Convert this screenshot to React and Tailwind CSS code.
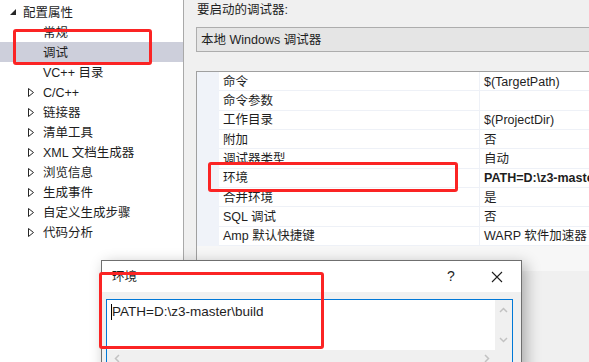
import React from 'react';

/* ─── 左侧树 ─── */
const TREE = [
  { label: '常规' },
  { label: '调试', selected: true },
  { label: 'VC++ 目录' },
  { label: 'C/C++', expander: true },
  { label: '链接器', expander: true },
  { label: '清单工具', expander: true },
  { label: 'XML 文档生成器', expander: true },
  { label: '浏览信息', expander: true },
  { label: '生成事件', expander: true },
  { label: '自定义生成步骤', expander: true },
  { label: '代码分析', expander: true },
];

/* ─── 属性表 ─── */
const PROPS = [
  ['命令', '$(TargetPath)'],
  ['命令参数', ''],
  ['工作目录', '$(ProjectDir)'],
  ['附加', '否'],
  ['调试器类型', '自动'],
  ['环境', 'PATH=D:\\z3-master\\build', true],
  ['合并环境', '是'],
  ['SQL 调试', '否'],
  ['Amp 默认快捷键', 'WARP 软件加速器'],
];

const FONT = { fontFamily: '"Liberation Sans", "Noto Sans CJK SC", sans-serif' };

const Expanded = () => (
  <svg width="6" height="6" viewBox="0 0 6 6" className="shrink-0">
    <path d="M6 0 L6 6 L0 6 Z" fill="#262626" />
  </svg>
);

const Collapsed = () => (
  <svg width="6" height="9" viewBox="0 0 6 9" className="shrink-0">
    <path d="M0.5 0.5 L5.5 4.5 L0.5 8.5 Z" fill="none" stroke="#262626" strokeWidth="1" />
  </svg>
);

const Chevron = ({ d }) => (
  <svg width="9" height="6" viewBox="0 0 9 6">
    <path d={d} fill="none" stroke="#c2c2c2" strokeWidth="1.5" />
  </svg>
);

export default function App() {
  return (
    <div className="relative w-[589px] h-[362px] overflow-hidden bg-[#f0f0f0] text-[12.5px] text-[#1e1e1e] flex" style={FONT}>
      {/* 左侧树 */}
      <div className="w-[184px] h-full bg-white border-r border-[#a9a9a9] pt-[2px] shrink-0">
        <div className="h-[20px] flex items-center pl-[10px] gap-[7px]">
          <Expanded />
          <span className="pt-[2px]">配置属性</span>
        </div>
        {TREE.map((t) => (
          <div
            key={t.label}
            className={`h-[20px] flex items-center ${t.selected ? 'bg-[#cdcfdb]' : ''}`}
          >
            <div className="w-[43px] flex justify-end pr-[9px]">{t.expander && <Collapsed />}</div>
            <span className="pt-[2px]">{t.label}</span>
          </div>
        ))}
      </div>

      {/* 右侧 */}
      <div className="flex-1 pl-[12px] pt-[3px] min-w-0">
        <div className="h-[15px] pl-[1px] leading-[15px]">要启动的调试器:</div>
        <div className="mt-[9px] h-[25px] bg-[#e5e5e5] border border-[#adadad] border-r-0 flex items-center pl-[4px] pt-[1px]">
          本地 Windows 调试器
        </div>

        <div className="mt-[19px] h-[200px] border-t border-l border-[#a0a0a0] bg-[#f7f7f7] flex">
          <div className="w-[22px] h-[174px] bg-[#f0f3f9] shrink-0" />
          <div className="flex-1 min-w-0">
            {PROPS.map(([k, v, bold]) => (
              <div key={k} className="h-[19.33px] flex bg-white border-b border-[#eef1f7]">
                <div className="w-[260px] shrink-0 pl-[4px] pt-[2px] flex items-center">{k}</div>
                <div
                  className={`flex-1 pl-[4px] pt-[2px] flex items-center whitespace-nowrap overflow-hidden border-l border-[#eef1f7] ${bold ? 'font-bold' : ''}`}
                >
                  {v}
                </div>
              </div>
            ))}
          </div>
        </div>
      </div>

      {/* 环境对话框 */}
      <div className="absolute left-[101px] top-[260px] w-[421px] h-[120px] border border-[#6f6f6f] bg-[#f0f0f0] shadow-[4px_4px_14px_rgba(0,0,0,0.3)] flex flex-col">
        <div className="h-[31px] bg-white flex items-center pl-[10px] shrink-0">
          <span className="flex-1 pt-[1px]">环境</span>
          <span className="w-[20px] text-center text-[14px]">?</span>
          <svg width="12" height="12" viewBox="0 0 12 12" className="ml-[30px] mr-[18px]">
            <path d="M1 1 L11 11 M11 1 L1 11" stroke="#1e1e1e" strokeWidth="1.1" />
          </svg>
        </div>
        <div className="ml-[4px] mr-[8px] mt-[7px] h-[80px] border border-[#0078d7] flex flex-col">
          <div className="h-[50px] flex">
            <div className="flex-1 bg-white pl-[4px] pt-[3px] flex items-start">
              <span className="w-px h-[16px] bg-black mt-[1px]" />
              <span className="text-[13.5px] leading-[18px]">PATH=D:\z3-master\build</span>
            </div>
            <div className="w-[17px] flex flex-col items-center justify-between py-[7px]">
              <Chevron d="M1 5 L4.5 1.5 L8 5" />
              <Chevron d="M1 1 L4.5 4.5 L8 1" />
            </div>
          </div>
          <div className="h-[16px] flex items-center justify-between px-[7px] pr-[22px]">
            <svg width="6" height="9" viewBox="0 0 6 9"><path d="M5 1 L1.5 4.5 L5 8" fill="none" stroke="#c2c2c2" strokeWidth="1.5" /></svg>
            <svg width="6" height="9" viewBox="0 0 6 9"><path d="M1 1 L4.5 4.5 L1 8" fill="none" stroke="#c2c2c2" strokeWidth="1.5" /></svg>
          </div>
        </div>
      </div>

      {/* 红色标注框 */}
      <div className="absolute left-[13px] top-[29px] w-[139px] h-[36px] border-[3px] border-[#fb2424] rounded-[3px]" />
      <div className="absolute left-[208px] top-[162px] w-[250px] h-[30px] border-[3px] border-[#fb2424] rounded-[3px]" />
      <div className="absolute left-[99px] top-[272px] w-[225px] h-[77px] border-[3px] border-[#fb2424] rounded-[3px]" />
    </div>
  );
}
